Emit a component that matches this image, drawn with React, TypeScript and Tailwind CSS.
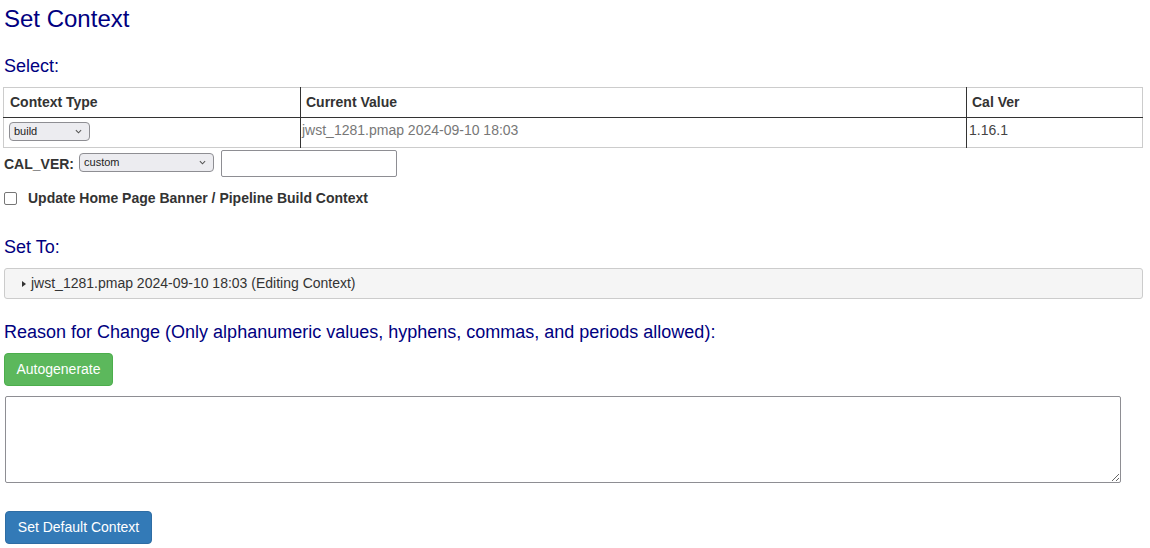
import React from 'react';

const font = { fontFamily: '"Liberation Sans", Arial, Helvetica, sans-serif' };

function Chevron() {
  return (
    <svg viewBox="0 0 8 5" className="w-[7px] h-[5px]" fill="none" stroke="#555" strokeWidth="1.2">
      <path d="M1 1l3 3 3-3" />
    </svg>
  );
}

function FakeSelect({ value, width }: { value: string; width: string }) {
  return (
    <div className={`relative ${width} h-[19px]`}>
      <select
        defaultValue={value}
        className="appearance-none block w-full h-full rounded-[4px] border border-[#8e8e93] bg-[#ececf0] pl-[4px] py-0 text-[11px] leading-[15px] text-[#222] outline-none"
      >
        <option value={value}>{value}</option>
      </select>
      <span className="pointer-events-none absolute right-[8px] top-[7px] flex">
        <Chevron />
      </span>
    </div>
  );
}

export default function App() {
  return (
    <div className="w-[1150px] h-[548px] bg-white text-[#333] overflow-hidden" style={font}>
      {/* Page title */}
      <h1 className="pt-[5px] pl-[4px] text-[24px] leading-[28px] text-[#000080]">Set Context</h1>

      <h2 className="mt-[22px] pl-[4px] text-[18px] leading-[22px] text-[#000080]">Select:</h2>

      {/* Context table */}
      <table className="mt-[10px] ml-[3px] w-[1140px] border-collapse border border-[#ccc] text-[14px]">
        <thead>
          <tr className="h-[30px] border-b border-[#333]">
            <th className="w-[297px] pl-[6px] text-left font-bold">Context Type</th>
            <th className="w-[666px] border-l border-[#333] pl-[5px] text-left font-bold">Current Value</th>
            <th className="border-l border-[#333] pl-[5px] text-left font-bold">Cal Ver</th>
          </tr>
        </thead>
        <tbody>
          <tr className="h-[30px] align-top">
            <td className="pl-[5px] pt-[4px]">
              <FakeSelect value="build" width="w-[81px]" />
            </td>
            <td className="border-l border-[#333] pl-[1px] pt-[4px] text-[#777] leading-[17px]">
              jwst_1281.pmap 2024-09-10 18:03
            </td>
            <td className="border-l border-[#333] pl-[2px] pt-[4px] text-[#444] leading-[17px]">1.16.1</td>
          </tr>
        </tbody>
      </table>

      {/* CAL_VER row */}
      <div className="mt-[2px] ml-[4px] flex items-center h-[27px]">
        <span className="font-bold text-[14px] pt-[2px]">CAL_VER:</span>
        <div className="ml-[5px] mb-[3px]">
          <FakeSelect value="custom" width="w-[135px]" />
        </div>
        <input className="ml-[7px] w-[176px] h-[27px] border border-[#8e8e93] rounded-[2px] outline-none" />
      </div>

      {/* Checkbox */}
      <label className="mt-[12px] ml-[4px] flex items-center h-[18px]">
        <span className="w-[13px] h-[13px] rounded-[2px] border border-[#767676] bg-white" />
        <span className="ml-[11px] font-bold text-[14px]">Update Home Page Banner / Pipeline Build Context</span>
      </label>

      <h2 className="mt-[29px] pl-[4px] text-[18px] leading-[22px] text-[#000080]">Set To:</h2>

      {/* Details */}
      <div className="mt-[10px] ml-[4px] w-[1139px] h-[31px] border border-[#ccc] rounded-[3px] bg-[#f5f5f5] flex items-center">
        <svg viewBox="0 0 4 6" className="ml-[17px] w-[4px] h-[6px]" fill="#333">
          <path d="M0 0l4 3-4 3z" />
        </svg>
        <span className="ml-[5px] text-[14px] text-[#333]">jwst_1281.pmap 2024-09-10 18:03 (Editing Context)</span>
      </div>

      <h2 className="mt-[22px] pl-[4px] text-[18px] leading-[22px] text-[#000080]">
        Reason for Change (Only alphanumeric values, hyphens, commas, and periods allowed):
      </h2>

      <button className="mt-[10px] ml-[4px] w-[109px] h-[33px] rounded-[4px] bg-[#5cb85c] border border-[#4cae4c] text-white text-[14px]">
        Autogenerate
      </button>

      <textarea className="block mt-[10px] ml-[5px] w-[1116px] h-[87px] border border-[#8e8e93] rounded-[2px] outline-none" />

      <button className="mt-[28px] ml-[5px] w-[147px] h-[33px] rounded-[4px] bg-[#337ab7] border border-[#2e6da4] text-white text-[14px]">
        Set Default Context
      </button>
    </div>
  );
}
